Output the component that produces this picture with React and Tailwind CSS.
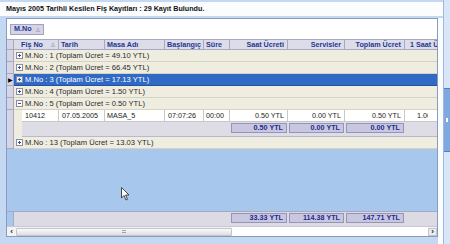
import React from 'react';

const cols = [
  { label: 'Fiş No', w: 'w-[45px]', pl: 'pl-[7px]', sort: true },
  { label: 'Tarih', w: 'w-[46px]' },
  { label: 'Masa Adı', w: 'w-[60px]' },
  { label: 'Başlangıç', w: 'w-[39px]' },
  { label: 'Süre', w: 'w-[26px]' },
  { label: 'Saat Ücreti', w: 'w-[58px]', right: true },
  { label: 'Servisler', w: 'w-[57px]', right: true },
  { label: 'Toplam Ücret', w: 'w-[60px]', right: true },
  { label: '1 Saat Ücreti', w: 'w-[55px]', pl: 'pl-[5px]' },
];

const groups = [
  { no: 1, total: '49.10' },
  { no: 2, total: '66.45' },
  { no: 3, total: '17.13', selected: true },
  { no: 4, total: '1.50' },
];

const PlusBox = ({ open, selected }) => (
  <span
    className={`relative inline-block w-[7px] h-[7px] border border-[#8c8c9c] shrink-0 ${
      selected ? 'bg-[#e8eefa]' : 'bg-white'
    }`}
  >
    <span className="absolute left-[1px] top-[2px] w-[3px] h-px bg-[#3050a0]" />
    {!open && <span className="absolute left-[2px] top-[1px] w-px h-[3px] bg-[#3050a0]" />}
  </span>
);

const GroupRow = ({ no, total, selected, open }) => (
  <div className="flex h-[12px] shrink-0">
    <div className="w-[7px] shrink-0 bg-[#d6d5e6] border-r border-b border-[#a9a8c2] flex items-center justify-center">
      {selected && <span className="text-[6px] leading-none text-black">▶</span>}
    </div>
    <div
      className={`flex-1 flex items-center gap-[2px] pl-[2px] border-b ${
        selected ? 'bg-[#316ac5] text-white border-[#25509a]' : 'bg-[#efede0] text-[#2a2a2a] border-[#d4d2c2]'
      }`}
    >
      <PlusBox open={open} selected={selected} />
      <span className="whitespace-nowrap text-[7.6px]">M.No : {no} (Toplam Ücret = {total} YTL)</span>
    </div>
  </div>
);

const Sum = ({ w, v }) => (
  <div className={`${w} shrink-0 px-[1px] pt-[1px]`}>
    <div className="h-[10px] bg-[#c8c7df] border border-[#9594b9] flex items-center justify-end pr-[3px] font-bold text-[#1c2a8e] whitespace-nowrap">
      {v}
    </div>
  </div>
);

export default function App() {
  const cell = 'shrink-0 h-full flex items-center border-r border-[#c9c9c9] whitespace-nowrap overflow-hidden';
  return (
    <div className="w-[450px] h-[244px] overflow-hidden bg-[#c4d8f2] flex font-['Liberation_Sans',Arial,sans-serif] text-[7.2px] leading-none">
      <div className="w-[443px] flex flex-col pt-[2px]">
        <div className="h-[16px] bg-[#fbfcfe] flex items-center pl-[6px] font-bold text-[#111] border-b-2 border-[#c4d8f2]">
          Mayıs 2005 Tarihli Kesilen Fiş Kayıtları : 29 Kayıt Bulundu.
        </div>
        <div className="flex-1 flex">
          <div className="w-[6px] shrink-0" />
          <div className="w-[432px] h-[219px] border border-[#8a9bc0] bg-white flex flex-col overflow-hidden">
            <div className="h-[20px] shrink-0 bg-white flex items-center pl-[3px]">
              <div className="h-[11px] w-[34px] bg-[#d5d4e6] border border-[#a2a1bf] flex items-center pl-[3px] gap-[4px] font-bold text-[#1e3891]">
                M.No <span className="text-[#9c9cb8] text-[5px]">△</span>
              </div>
            </div>
            <div className="h-[11px] shrink-0 flex bg-[#dddce9] border-y border-[#a9a8c2]">
              <div className="w-[7px] shrink-0 bg-[#d6d5e6] border-r border-[#a9a8c2]" />
              {cols.map((c) => (
                <div
                  key={c.label}
                  className={`${c.w} shrink-0 flex items-center border-r border-[#a9a8c2] font-bold text-[#1e3891] whitespace-nowrap overflow-hidden ${
                    c.right ? 'justify-end pr-[3px]' : c.pl || 'pl-[2px]'
                  }`}
                >
                  {c.label}
                  {c.sort && <span className="ml-auto mr-[3px] text-[#9c9cb8] text-[5px]">△</span>}
                </div>
              ))}
            </div>
            {groups.map((g) => (
              <GroupRow key={g.no} {...g} />
            ))}
            <GroupRow no={5} total="0.50" open />
            <div className="flex h-[12px] shrink-0">
              <div className="w-[7px] shrink-0 bg-[#d6d5e6] border-r border-[#a9a8c2]" />
              <div className="w-[8px] shrink-0 bg-[#efede0]" />
              <div className="flex-1 flex bg-white border-b border-[#c9c9c9] text-[#222]">
                <div className={`${cell} w-[37px] pl-[3px]`}>10412</div>
                <div className={`${cell} w-[46px] pl-[3px]`}>07.05.2005</div>
                <div className={`${cell} w-[60px] pl-[2px]`}>MASA_5</div>
                <div className={`${cell} w-[39px] pl-[3px]`}>07:07:26</div>
                <div className={`${cell} w-[26px] pl-[2px]`}>00:00</div>
                <div className={`${cell} w-[58px] justify-end pr-[3px]`}>0.50 YTL</div>
                <div className={`${cell} w-[57px] justify-end pr-[3px]`}>0.00 YTL</div>
                <div className={`${cell} w-[60px] justify-end pr-[3px]`}>0.50 YTL</div>
                <div className="shrink-0 h-full w-[23px] pl-[12px] flex items-center whitespace-nowrap overflow-hidden">1.00 YTL</div>
              </div>
            </div>
            <div className="flex h-[15px] shrink-0">
              <div className="w-[7px] shrink-0 bg-[#d6d5e6] border-r border-[#a9a8c2]" />
              <div className="w-[8px] shrink-0 bg-[#efede0]" />
              <div className="flex-1 flex bg-[#dedde6] border-b border-[#b9b8cc]">
                <div className="w-[208px] shrink-0" />
                <Sum w="w-[58px]" v="0.50 YTL" />
                <Sum w="w-[57px]" v="0.00 YTL" />
                <Sum w="w-[60px]" v="0.00 YTL" />
              </div>
            </div>
            <GroupRow no={13} total="13.03" />
            <div className="flex-1 bg-[#a7c7ec] relative">
              <svg className="absolute left-[114px] top-[38px]" width="9" height="14" viewBox="0 0 9 14">
                <path d="M0.5 0.5 L0.5 11 L3 8.5 L5 13 L6.5 12.3 L4.6 8 L8 8 Z" fill="white" stroke="#222" strokeWidth="0.8" />
              </svg>
            </div>
            <div className="h-[15px] shrink-0 flex bg-[#dcdbe4] border-t border-[#a9a8c2]">
              <div className="w-[7px] shrink-0 bg-[#a7c7ec] border-r border-[#a9a8c2]" />
              <div className="w-[216px] shrink-0" />
              <Sum w="w-[58px]" v="33.33 YTL" />
              <Sum w="w-[57px]" v="114.38 YTL" />
              <Sum w="w-[60px]" v="147.71 YTL" />
            </div>
            <div className="h-[10px] shrink-0 flex items-center bg-[#f3f3f3] border-t border-[#c8c8d4]">
              <div className="w-[9px] h-full flex items-center justify-center text-[#222] font-bold text-[8px]">‹</div>
              <div className="w-[216px] h-[8px] bg-gradient-to-b from-[#fafafa] to-[#dedee2] border border-[#c4c4cc] rounded-[1px] flex items-center justify-center">
                <span className="w-[4px] h-[3px] border-y border-[#a0a0a8]" />
              </div>
              <div className="flex-1 h-full bg-white" />
              <div className="w-[9px] h-[8px] bg-[#ececf0] border border-[#c4c4cc] flex items-center justify-center text-[#222] font-bold text-[8px]">›</div>
            </div>
          </div>
          <div className="w-[5px] shrink-0 bg-[#fbfcfe]" />
        </div>
      </div>
      <div className="w-[7px] shrink-0 bg-[#d8e6f8] border-l border-[#9db9e2] flex flex-col">
        <div className="h-[88px]" />
        <div className="h-[64px] bg-[#7fa8e0] border-y border-[#4f7fc8] flex items-center justify-center">
          <span className="w-[2px] h-[4px] bg-white" />
        </div>
      </div>
    </div>
  );
}
